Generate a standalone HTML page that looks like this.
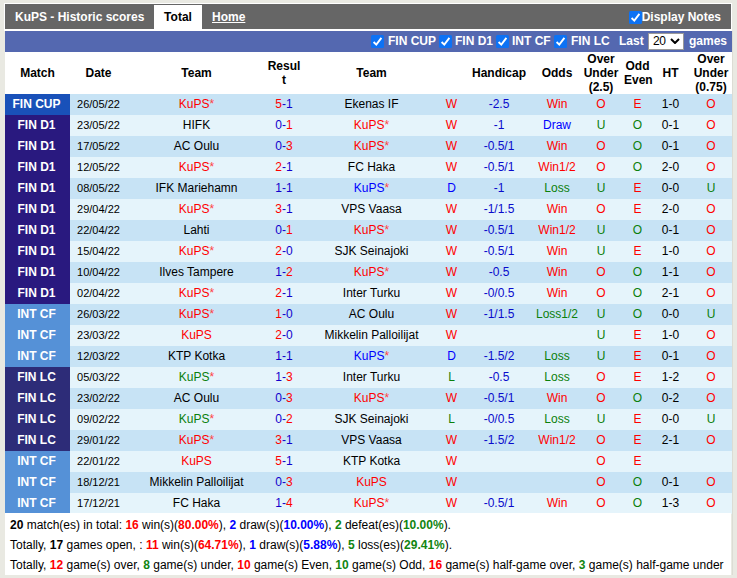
<!DOCTYPE html>
<html><head><meta charset="utf-8">
<style>
html,body{margin:0;padding:0;}
body{width:737px;height:578px;background:#e9e9e2;position:relative;overflow:hidden;font-family:"Liberation Sans",sans-serif;font-size:12px;color:#000;}
#hd{position:absolute;left:4px;top:3px;width:726px;height:25px;border:1px solid #fff;border-bottom:none;background:#666;}
#hdw{position:absolute;left:4px;top:29px;width:728px;height:2px;background:#fff;}
#hd .t{position:absolute;top:0;height:25px;line-height:27px;font-weight:bold;color:#fff;}
#t1{left:0;padding:0 10px;}
#t2{left:149px;width:48px;background:#fff;color:#000 !important;text-align:center;top:1px !important;height:25px !important;line-height:25px !important;}
#t3{left:197px;padding:0 10px;text-decoration:underline;}
#dn{position:absolute;right:10px;top:1px;height:25px;line-height:25px;font-weight:bold;color:#fff;}
.cb{display:inline-block;width:13px;height:13px;vertical-align:middle;position:relative;}
.cb svg{position:absolute;left:0;top:0;}
#bar{position:absolute;left:5px;top:31px;width:727px;height:21px;background:#5468b0;color:#fff;font-weight:bold;}
#bar span.l{position:absolute;top:0;line-height:21px;}
#sel{position:absolute;left:643px;top:2px;width:36px;height:17px;background:#fff;box-sizing:border-box;border:1px solid #999;}
table{position:absolute;left:5px;top:52px;border-collapse:collapse;table-layout:fixed;width:727px;}
td,th{padding:0;text-align:center;white-space:nowrap;}
th{height:42px;line-height:14px;background:#fff;font-weight:bold;}
td{height:21px;line-height:21px;}
tr.a td{background:#c7e3f5;}
tr.c td{background:#e5f4fb;}
td.m{color:#fff;font-weight:bold;padding-right:2px;}
tr td.cup{background:#1951b9;}
tr td.d1{background:#29197f;}
tr td.cf{background:#5591d7;}
tr td.lc{background:#2d2c78;}
td.dt{font-size:11px;}
.r{color:#f00;}
.b{color:#00f;}
.g{color:#0b800b;}
.sb{color:#10c;}
.st{color:#f44;}
td.hc{color:#0a0acc;}
#sum{position:absolute;left:5px;top:513px;width:726px;height:62px;z-index:2;background:#fff;}
#sum div{position:absolute;left:5px;height:20px;line-height:20px;white-space:nowrap;}
#sum b.r{color:#f00} #sum b.b{color:#00f} #sum b.g{color:#118511}
</style></head><body>
<div id="hd">
 <span class="t" id="t1">KuPS - Historic scores</span>
 <span class="t" id="t2">Total</span>
 <span class="t" id="t3">Home</span>
 <span id="dn"><span class="cb"><svg width="13" height="13" viewBox="0 0 13 13"><rect width="13" height="13" rx="1.5" fill="#0d72f4"/><path d="M2.6 7 L5.3 9.6 L10.4 2.9" fill="none" stroke="#fff" stroke-width="1.9"/></svg></span>Display Notes</span>
</div>
<div id="hdw"></div><div style="position:absolute;left:732px;top:31px;width:1px;height:544px;background:#dcdcd4"></div>
<div id="bar">
 <span class="cb" style="position:absolute;left:366px;top:4px"><svg width="13" height="13" viewBox="0 0 13 13"><rect width="13" height="13" rx="1.5" fill="#0d72f4"/><path d="M2.6 7 L5.3 9.6 L10.4 2.9" fill="none" stroke="#fff" stroke-width="1.9"/></svg></span><span class="l" style="left:383px">FIN CUP</span>
 <span class="cb" style="position:absolute;left:434px;top:4px"><svg width="13" height="13" viewBox="0 0 13 13"><rect width="13" height="13" rx="1.5" fill="#0d72f4"/><path d="M2.6 7 L5.3 9.6 L10.4 2.9" fill="none" stroke="#fff" stroke-width="1.9"/></svg></span><span class="l" style="left:450px">FIN D1</span>
 <span class="cb" style="position:absolute;left:491px;top:4px"><svg width="13" height="13" viewBox="0 0 13 13"><rect width="13" height="13" rx="1.5" fill="#0d72f4"/><path d="M2.6 7 L5.3 9.6 L10.4 2.9" fill="none" stroke="#fff" stroke-width="1.9"/></svg></span><span class="l" style="left:507px">INT CF</span>
 <span class="cb" style="position:absolute;left:549px;top:4px"><svg width="13" height="13" viewBox="0 0 13 13"><rect width="13" height="13" rx="1.5" fill="#0d72f4"/><path d="M2.6 7 L5.3 9.6 L10.4 2.9" fill="none" stroke="#fff" stroke-width="1.9"/></svg></span><span class="l" style="left:566px">FIN LC</span>
 <span class="l" style="left:614px">Last</span>
 <div id="sel"><span style="position:absolute;left:4px;top:0;line-height:14px;color:#000;font-weight:normal;font-size:12px;letter-spacing:-0.5px">20</span>
 <svg style="position:absolute;left:21px;top:4px" width="10" height="6" viewBox="0 0 10 6"><path d="M1 1 L5 5 L9 1" fill="none" stroke="#000" stroke-width="2"/></svg></div>
 <span class="l" style="left:684px">games</span>
</div>
<table>
<colgroup><col style="width:65px"><col style="width:57px"><col style="width:139px"><col style="width:36px"><col style="width:139px"><col style="width:21px"><col style="width:74px"><col style="width:42px"><col style="width:46px"><col style="width:27px"><col style="width:39px"><col style="width:42px"></colgroup>
<tr><th>Match</th><th>Date</th><th>Team</th><th>Resul<br>t</th><th>Team</th><th></th><th>Handicap</th><th>Odds</th><th>Over<br>Under<br>(2.5)</th><th>Odd<br>Even</th><th>HT</th><th>Over<br>Under<br>(0.75)</th></tr>
<tr class="a"><td class="m cup">FIN CUP</td><td class="dt">26/05/22</td><td><span class="r">KuPS</span><span class="st">*</span></td><td><span class="r">5</span><span class="sb">-1</span></td><td>Ekenas IF</td><td class="r">W</td><td class="hc">-2.5</td><td class="r">Win</td><td class="r">O</td><td class="r">E</td><td>1-0</td><td class="r">O</td></tr><tr class="c"><td class="m d1">FIN D1</td><td class="dt">23/05/22</td><td>HIFK</td><td><span class="sb">0-</span><span class="r">1</span></td><td><span class="r">KuPS</span><span class="st">*</span></td><td class="r">W</td><td class="hc">-1</td><td class="b">Draw</td><td class="g">U</td><td class="g">O</td><td>0-1</td><td class="r">O</td></tr><tr class="a"><td class="m d1">FIN D1</td><td class="dt">17/05/22</td><td>AC Oulu</td><td><span class="sb">0-</span><span class="r">3</span></td><td><span class="r">KuPS</span><span class="st">*</span></td><td class="r">W</td><td class="hc">-0.5/1</td><td class="r">Win</td><td class="r">O</td><td class="g">O</td><td>0-1</td><td class="r">O</td></tr><tr class="c"><td class="m d1">FIN D1</td><td class="dt">12/05/22</td><td><span class="r">KuPS</span><span class="st">*</span></td><td><span class="r">2</span><span class="sb">-1</span></td><td>FC Haka</td><td class="r">W</td><td class="hc">-0.5/1</td><td class="r">Win1/2</td><td class="r">O</td><td class="g">O</td><td>2-0</td><td class="r">O</td></tr><tr class="a"><td class="m d1">FIN D1</td><td class="dt">08/05/22</td><td>IFK Mariehamn</td><td><span class="sb">1-1</span></td><td><span class="b">KuPS</span><span class="st">*</span></td><td class="b">D</td><td class="hc">-1</td><td class="g">Loss</td><td class="g">U</td><td class="r">E</td><td>0-0</td><td class="g">U</td></tr><tr class="c"><td class="m d1">FIN D1</td><td class="dt">29/04/22</td><td><span class="r">KuPS</span><span class="st">*</span></td><td><span class="r">3</span><span class="sb">-1</span></td><td>VPS Vaasa</td><td class="r">W</td><td class="hc">-1/1.5</td><td class="r">Win</td><td class="r">O</td><td class="r">E</td><td>2-0</td><td class="r">O</td></tr><tr class="a"><td class="m d1">FIN D1</td><td class="dt">22/04/22</td><td>Lahti</td><td><span class="sb">0-</span><span class="r">1</span></td><td><span class="r">KuPS</span><span class="st">*</span></td><td class="r">W</td><td class="hc">-0.5/1</td><td class="r">Win1/2</td><td class="g">U</td><td class="g">O</td><td>0-1</td><td class="r">O</td></tr><tr class="c"><td class="m d1">FIN D1</td><td class="dt">15/04/22</td><td><span class="r">KuPS</span><span class="st">*</span></td><td><span class="r">2</span><span class="sb">-0</span></td><td>SJK Seinajoki</td><td class="r">W</td><td class="hc">-0.5/1</td><td class="r">Win</td><td class="g">U</td><td class="r">E</td><td>1-0</td><td class="r">O</td></tr><tr class="a"><td class="m d1">FIN D1</td><td class="dt">10/04/22</td><td>Ilves Tampere</td><td><span class="sb">1-</span><span class="r">2</span></td><td><span class="r">KuPS</span><span class="st">*</span></td><td class="r">W</td><td class="hc">-0.5</td><td class="r">Win</td><td class="r">O</td><td class="g">O</td><td>1-1</td><td class="r">O</td></tr><tr class="c"><td class="m d1">FIN D1</td><td class="dt">02/04/22</td><td><span class="r">KuPS</span><span class="st">*</span></td><td><span class="r">2</span><span class="sb">-1</span></td><td>Inter Turku</td><td class="r">W</td><td class="hc">-0/0.5</td><td class="r">Win</td><td class="r">O</td><td class="g">O</td><td>2-1</td><td class="r">O</td></tr><tr class="a"><td class="m cf">INT CF</td><td class="dt">26/03/22</td><td><span class="r">KuPS</span><span class="st">*</span></td><td><span class="r">1</span><span class="sb">-0</span></td><td>AC Oulu</td><td class="r">W</td><td class="hc">-1/1.5</td><td class="g">Loss1/2</td><td class="g">U</td><td class="g">O</td><td>0-0</td><td class="g">U</td></tr><tr class="c"><td class="m cf">INT CF</td><td class="dt">23/03/22</td><td><span class="r">KuPS</span></td><td><span class="r">2</span><span class="sb">-0</span></td><td>Mikkelin Palloilijat</td><td class="r">W</td><td class="hc"></td><td class=""></td><td class="g">U</td><td class="r">E</td><td>1-0</td><td class="r">O</td></tr><tr class="a"><td class="m cf">INT CF</td><td class="dt">12/03/22</td><td>KTP Kotka</td><td><span class="sb">1-1</span></td><td><span class="b">KuPS</span><span class="st">*</span></td><td class="b">D</td><td class="hc">-1.5/2</td><td class="g">Loss</td><td class="g">U</td><td class="r">E</td><td>0-1</td><td class="r">O</td></tr><tr class="c"><td class="m lc">FIN LC</td><td class="dt">05/03/22</td><td><span class="g">KuPS</span><span class="st">*</span></td><td><span class="sb">1-</span><span class="r">3</span></td><td>Inter Turku</td><td class="g">L</td><td class="hc">-0.5</td><td class="g">Loss</td><td class="r">O</td><td class="r">E</td><td>1-2</td><td class="r">O</td></tr><tr class="a"><td class="m lc">FIN LC</td><td class="dt">23/02/22</td><td>AC Oulu</td><td><span class="sb">0-</span><span class="r">3</span></td><td><span class="r">KuPS</span><span class="st">*</span></td><td class="r">W</td><td class="hc">-0.5/1</td><td class="r">Win</td><td class="r">O</td><td class="g">O</td><td>0-2</td><td class="r">O</td></tr><tr class="c"><td class="m lc">FIN LC</td><td class="dt">09/02/22</td><td><span class="g">KuPS</span><span class="st">*</span></td><td><span class="sb">0-</span><span class="r">2</span></td><td>SJK Seinajoki</td><td class="g">L</td><td class="hc">-0/0.5</td><td class="g">Loss</td><td class="g">U</td><td class="r">E</td><td>0-0</td><td class="g">U</td></tr><tr class="a"><td class="m lc">FIN LC</td><td class="dt">29/01/22</td><td><span class="r">KuPS</span><span class="st">*</span></td><td><span class="r">3</span><span class="sb">-1</span></td><td>VPS Vaasa</td><td class="r">W</td><td class="hc">-1.5/2</td><td class="r">Win1/2</td><td class="r">O</td><td class="r">E</td><td>2-1</td><td class="r">O</td></tr><tr class="c"><td class="m cf">INT CF</td><td class="dt">22/01/22</td><td><span class="r">KuPS</span></td><td><span class="r">5</span><span class="sb">-1</span></td><td>KTP Kotka</td><td class="r">W</td><td class="hc"></td><td class=""></td><td class="r">O</td><td class="r">E</td><td></td><td class=""></td></tr><tr class="a"><td class="m cf">INT CF</td><td class="dt">18/12/21</td><td>Mikkelin Palloilijat</td><td><span class="sb">0-</span><span class="r">3</span></td><td><span class="r">KuPS</span></td><td class="r">W</td><td class="hc"></td><td class=""></td><td class="r">O</td><td class="g">O</td><td>0-1</td><td class="r">O</td></tr><tr class="c"><td class="m cf">INT CF</td><td class="dt">17/12/21</td><td>FC Haka</td><td><span class="sb">1-</span><span class="r">4</span></td><td><span class="r">KuPS</span><span class="st">*</span></td><td class="r">W</td><td class="hc">-0.5/1</td><td class="r">Win</td><td class="r">O</td><td class="g">O</td><td>1-3</td><td class="r">O</td></tr>
</table>
<div id="sum">
<div style="top:2px"><b>20</b> match(es) in total: <b class="r">16</b> win(s)(<b class="r">80.00%</b>), <b class="b">2</b> draw(s)(<b class="b">10.00%</b>), <b class="g">2</b> defeat(es)(<b class="g">10.00%</b>).</div>
<div style="top:22px">Totally, <b>17</b> games open, : <b class="r">11</b> win(s)(<b class="r">64.71%</b>), <b class="b">1</b> draw(s)(<b class="b">5.88%</b>), <b class="g">5</b> loss(es)(<b class="g">29.41%</b>).</div>
<div style="top:42px">Totally, <b class="r">12</b> game(s) over, <b class="g">8</b> game(s) under, <b class="r">10</b> game(s) Even, <b class="g">10</b> game(s) Odd, <b class="r">16</b> game(s) half-game over, <b class="g">3</b> game(s) half-game under</div>
</div>
</body></html>
